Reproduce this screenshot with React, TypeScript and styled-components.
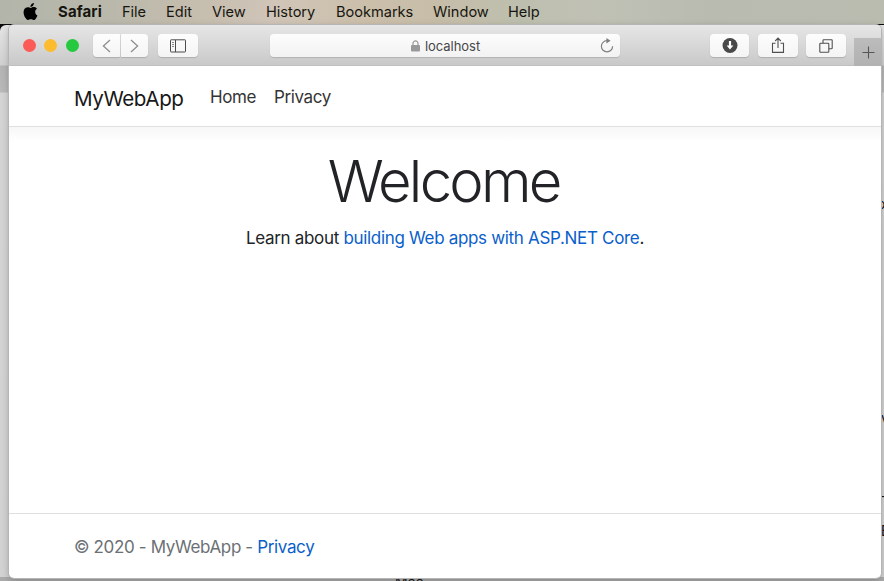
import React from "react";
import styled, { createGlobalStyle } from "styled-components";
import { SiApple } from "react-icons/si";

const GlobalStyle = createGlobalStyle`
  * { box-sizing: border-box; }
  html, body { margin: 0; padding: 0; overflow: hidden; }
  body { font-family: Inter, "Liberation Sans", sans-serif; }
  a { color: inherit; text-decoration: none; }
  svg { display: block; }
`;

const Desktop = styled.div`
  position: relative;
  width: 884px;
  height: 581px;
  overflow: hidden;
  background: #0b0b0b;
`;

const MenuBar = styled.nav`
  display: flex;
  align-items: center;
  gap: 20px;
  height: 24px;
  padding-left: 22px;
  background: linear-gradient(90deg, #b3b5ab 0%, #b9b8ab 12%, #c5bdae 22%, #d0c5b8 31%, #cbbfaa 42%, #c6bda9 50%, #bdbfae 59%, #c0c1b5 68%, #b9bbb0 80%, #babcb0 100%);
  color: #16150f;
`;

const AppleMark = styled.span`
  width: 16px;
  margin-top: -2px;
  color: #000;
`;

const MenuItem = styled.span<{ $w: number; $bold?: boolean }>`
  width: ${(p) => p.$w}px;
  font-size: ${(p) => (p.$bold ? 15 : 14.6)}px;
  line-height: 24px;
  font-weight: ${(p) => (p.$bold ? 700 : 420)};
  letter-spacing: ${(p) => (p.$bold ? 0.1 : -0.02)}px;
  white-space: nowrap;
`;

const BackWindow = styled.div`
  position: absolute;
  top: 25px;
  left: 0;
  width: 884px;
  height: 556px;
  border-radius: 6px 0 0 0;
  overflow: hidden;
  background: linear-gradient(#e4e4e4 0, #d0d0d0 40px, #b4b4b4 41px, #b9b9b9 67px, #d4d4d4 68px, #d2d2d2 100%);
`;

const BackShade = styled.div`
  position: absolute;
  inset: auto 0 0 0;
  height: 4px;
  background: #aaa;
`;

const BackText = styled.span<{ $x: number; $y: number }>`
  position: absolute;
  left: ${(p) => p.$x}px;
  top: ${(p) => p.$y}px;
  font-size: 14px;
  line-height: 16px;
  color: #111;
`;

const Window = styled.section`
  position: absolute;
  top: 25px;
  left: 9px;
  width: 872px;
  height: 553px;
  display: flex;
  flex-direction: column;
  overflow: hidden;
  border-radius: 5px;
  background: #fff;
`;

const WindowEdge = styled.div`
  position: absolute;
  top: 25px;
  left: 9px;
  width: 872px;
  height: 553px;
  border-radius: 5px;
  box-shadow: 0 0 0 1px #b5b5b5, 0 2px 7px rgba(0, 0, 0, 0.25);
`;

const Toolbar = styled.header`
  display: flex;
  flex: none;
  align-items: flex-start;
  height: 41px;
  padding: 9px 0 0 14px;
  background: linear-gradient(#e7e6e7, #c9c9c9);
  border-bottom: 1px solid #c0c0c0;
`;

const Lights = styled.div`
  display: flex;
  gap: 8.3px;
  padding-top: 5px;
  width: 70px;
`;

const Light = styled.span<{ $color: string }>`
  width: 13px;
  height: 13px;
  border-radius: 50%;
  background: ${(p) => p.$color};
`;

const ToolButton = styled.button<{ $w: number; $gap?: number; $side?: "left" | "right" }>`
  display: flex;
  align-items: center;
  justify-content: center;
  width: ${(p) => p.$w}px;
  height: 23px;
  margin: 0 ${(p) => p.$gap ?? 0}px 0 0;
  padding: 0;
  border: 0;
  border-radius: ${(p) =>
    p.$side === "left" ? "4px 1px 1px 4px" : p.$side === "right" ? "1px 4px 4px 1px" : "4px"};
  background: linear-gradient(#fdfdfd, #f4f4f4);
  box-shadow: 0 1px 1px rgba(0, 0, 0, 0.16);
`;

const AddressBar = styled.div`
  display: grid;
  grid-template-columns: 150px 1fr 20px;
  align-items: center;
  width: 350px;
  height: 23px;
  margin: 0 90px 0 72px;
  border-radius: 4px;
  background: linear-gradient(#fdfdfd, #f2f2f2);
  box-shadow: 0 1px 1px rgba(0, 0, 0, 0.14);
  color: #474747;
`;

const LockSlot = styled.span`
  display: flex;
  justify-content: flex-end;
`;

const Host = styled.span`
  padding: 1px 0 0 5px;
  font-size: 13px;
  letter-spacing: -0.05px;
`;

const NewTab = styled.button`
  display: grid;
  place-items: center;
  width: 27px;
  height: 28px;
  margin: 4px 0 0;
  padding: 0 0 0 1px;
  border: 0;
  background: linear-gradient(#bcbcbc, #b1b1b1);
`;

const SiteNav = styled.nav`
  display: flex;
  flex: none;
  align-items: flex-start;
  height: 61px;
  padding: 17px 0 0 65px;
  border-bottom: 1px solid #dee0e2;
  color: #343434;
`;

const Brand = styled.a`
  width: 136px;
  font-size: 20.6px;
  line-height: 31px;
  letter-spacing: -0.42px;
  color: #181818;
`;

const NavLink = styled.a<{ $w: number }>`
  width: ${(p) => p.$w}px;
  font-size: 17px;
  line-height: 28px;
  letter-spacing: -0.38px;
`;

const Main = styled.main`
  flex: 1;
  padding-top: 22px;
  text-align: center;
  background: linear-gradient(#f7f7f7, #fff 15px);
  color: #212326;
`;

const Title = styled.h1`
  margin: 0;
  font-size: 58px;
  line-height: 64px;
  font-weight: 330;
  letter-spacing: -2.75px;
  text-indent: -2.7px;
`;

const Lead = styled.p`
  margin: 13px 0 0;
  font-size: 17px;
  line-height: 24px;
  letter-spacing: -0.32px;
`;

const Link = styled.a`
  color: #0a60cb;
`;

const Footer = styled.footer`
  flex: none;
  height: 65px;
  padding: 21px 0 0 65px;
  border-top: 1px solid #dee0e2;
  font-size: 17px;
  line-height: 24px;
  letter-spacing: -0.36px;
  color: #6b7075;
`;

const Chevron = ({ right }: { right?: boolean }) => (
  <svg width="9" height="14" viewBox="0 0 9 14" fill="none" stroke="#8e8e8e" strokeWidth="1.3">
    <path d={right ? "M1 1l6.6 6L1 13" : "M8 1L1.4 7 8 13"} />
  </svg>
);

const SidebarIcon = () => (
  <svg width="18" height="14" viewBox="0 0 18 14" fill="none" stroke="#4c4c4c">
    <rect x="1.5" y=".8" width="15" height="12.2" rx=".6" />
    <path d="M6.5 1v12" />
    <path d="M3 3.5h2M3 5.5h2M3 7.5h2" stroke="#888" />
  </svg>
);

const LockIcon = () => (
  <svg width="9" height="12" viewBox="0 0 9 12">
    <rect x="0" y="5" width="9" height="6.5" rx="1" fill="#999" />
    <path d="M2 5.5V3.4a2.5 2.5 0 0 1 5 0v2.1" fill="none" stroke="#999" strokeWidth="1.2" />
  </svg>
);

const ReloadIcon = () => (
  <svg width="14" height="16" viewBox="0 0 14 16" fill="none" stroke="#808080" strokeWidth="1.2">
    <path d="M7 2.7A5.6 5.6 0 1 0 12.6 8.3" />
    <path d="M6.4 0L10.6 2.8 6.4 5.5z" fill="#808080" stroke="none" />
  </svg>
);

const DownloadIcon = () => (
  <svg width="16" height="16" viewBox="0 0 16 16">
    <circle cx="8" cy="7.5" r="7.5" fill="#484848" />
    <path d="M6.9 3h2.2v4.6h2.3L8 11.5 4.6 7.6h2.3z" fill="#fff" />
  </svg>
);

const ShareIcon = () => (
  <svg width="14" height="17" viewBox="0 0 14 17" fill="none" stroke="#505050" strokeWidth="1.1">
    <path d="M4.5 6.2H1.5v9.2h11V6.2h-3M7 11V1.2M4.2 4L7 1.1 9.8 4" />
  </svg>
);

const TabsIcon = () => (
  <svg width="14" height="14" viewBox="0 0 14 14" fill="none" stroke="#505050" strokeWidth="1.1">
    <rect x=".8" y="4.2" width="9" height="9" rx=".7" />
    <path d="M4 4.2V1.5Q4 .8 4.7.8h7.8q.7 0 .7.7v7.6q0 .7-.7.7H9.8" />
  </svg>
);

const PlusIcon = () => (
  <svg width="13" height="13" viewBox="0 0 13 13" stroke="#555" strokeWidth="1.1">
    <path d="M6.5 .5v12M.5 6.5h12" />
  </svg>
);

const menus = [
  { label: "File", w: 24 },
  { label: "Edit", w: 26 },
  { label: "View", w: 34 },
  { label: "History", w: 50 },
  { label: "Bookmarks", w: 77 },
  { label: "Window", w: 55 },
  { label: "Help", w: 32 },
];

export default function App() {
  return (
    <Desktop>
      <GlobalStyle />
      <MenuBar>
        <AppleMark>
          <SiApple size={17} />
        </AppleMark>
        <MenuItem $w={44} $bold>Safari</MenuItem>
        {menus.map((m) => (
          <MenuItem key={m.label} $w={m.w}>{m.label}</MenuItem>
        ))}
      </MenuBar>
      <BackWindow>
        <BackShade />
        <BackText $x={877} $y={171}>o</BackText>
        <BackText $x={881} $y={385}>v</BackText>
        <BackText $x={881} $y={463}>–</BackText>
        <BackText $x={881} $y={498}>E</BackText>
        <BackText $x={395} $y={549}>Mac</BackText>
      </BackWindow>
      <WindowEdge />
      <Window>
        <Toolbar>
          <Lights>
            <Light $color="#fc5b57" />
            <Light $color="#fdbc2d" />
            <Light $color="#25c93f" />
          </Lights>
          <ToolButton $w={27} $gap={1} $side="left"><Chevron /></ToolButton>
          <ToolButton $w={27} $gap={10} $side="right"><Chevron right /></ToolButton>
          <ToolButton $w={40}><SidebarIcon /></ToolButton>
          <AddressBar>
            <LockSlot><LockIcon /></LockSlot>
            <Host>localhost</Host>
            <ReloadIcon />
          </AddressBar>
          <ToolButton $w={39} $gap={9}><DownloadIcon /></ToolButton>
          <ToolButton $w={40} $gap={8}><ShareIcon /></ToolButton>
          <ToolButton $w={40} $gap={8}><TabsIcon /></ToolButton>
          <NewTab><PlusIcon /></NewTab>
        </Toolbar>
        <SiteNav>
          <Brand href="#">MyWebApp</Brand>
          <NavLink href="#" $w={64}>Home</NavLink>
          <NavLink href="#" $w={60}>Privacy</NavLink>
        </SiteNav>
        <Main>
          <Title>Welcome</Title>
          <Lead>
            Learn about <Link href="#">building Web apps with ASP.NET Core</Link>.
          </Lead>
        </Main>
        <Footer>
          © 2020 - MyWebApp - <Link href="#">Privacy</Link>
        </Footer>
      </Window>
    </Desktop>
  );
}
